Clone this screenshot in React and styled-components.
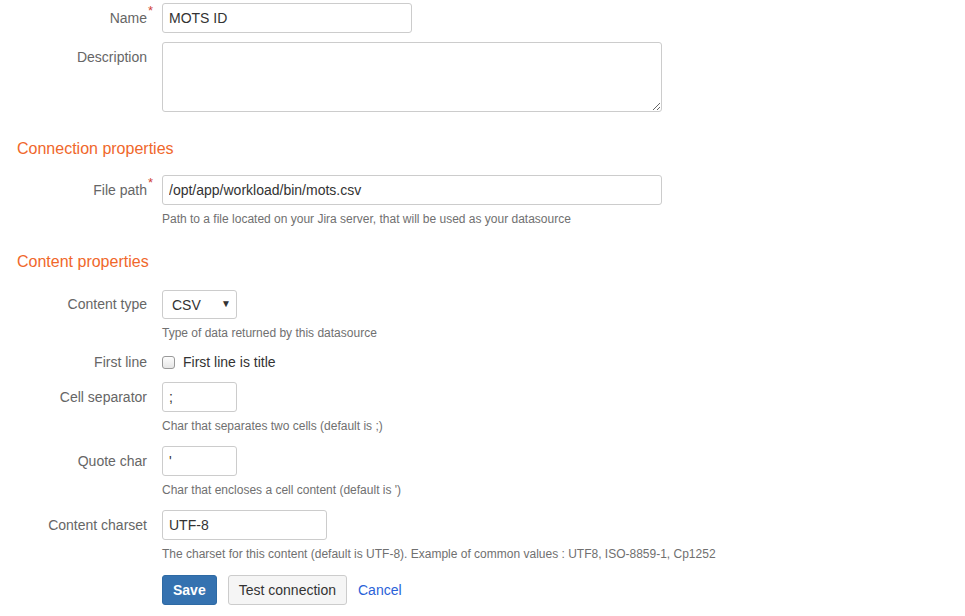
import React from "react";
import styled, { createGlobalStyle } from "styled-components";

const Global = createGlobalStyle`
  html, body { margin: 0; padding: 0; background: #fff; }
  body { font-family: "Liberation Sans", Arial, sans-serif; font-size: 14px; color: #333; }
  * { box-sizing: border-box; }
`;

const Form = styled.form`
  padding: 3px 0 0 0;
  width: 965px;
`;

const Group = styled.div`
  display: grid;
  grid-template-columns: 147px 1fr;
  column-gap: 15px;
  margin-bottom: ${(p) => p.$mb ?? 10}px;
`;

const Label = styled.label`
  position: relative;
  text-align: right;
  color: #666;
  font-size: 14px;
  line-height: ${(p) => p.$lh ?? 30}px;
  white-space: nowrap;
`;

const Req = styled.span`
  position: absolute;
  left: 100%;
  top: ${(p) => p.$top ?? 1}px;
  margin-left: 1px;
  color: #d04437;
  font-size: 13px;
  line-height: 13px;
`;

const Field = styled.div`
  display: flex;
  flex-direction: column;
  align-items: flex-start;
`;

const Input = styled.input`
  width: ${(p) => p.$w}px;
  height: 30px;
  border: 1px solid #ccc;
  border-radius: 3px;
  padding: 0 6px;
  font-family: "Liberation Sans", Arial, sans-serif;
  font-size: 14px;
  color: #333;
  background: #fff;
  outline: none;
`;

const TextArea = styled.textarea`
  width: 500px;
  height: 70px;
  border: 1px solid #ccc;
  border-radius: 3px;
  padding: 6px;
  font-family: "Liberation Sans", Arial, sans-serif;
  font-size: 14px;
  color: #333;
  outline: none;
  display: block;
`;

const Help = styled.div`
  margin-top: 6px;
  margin-bottom: 2px;
  font-size: 12px;
  line-height: 16px;
  color: #707070;
  white-space: nowrap;
`;

const Heading = styled.h3`
  margin: ${(p) => p.$mt}px 0 ${(p) => p.$mb}px 17px;
  font-weight: normal;
  font-size: 16px;
  line-height: 20px;
  color: #f0672b;
`;

const SelectBox = styled.div`
  position: relative;
  width: 75px;
  height: 29px;
  border: 1px solid #ccc;
  border-radius: 3px;
  background: #fff;
  display: flex;
  align-items: center;
  padding: 0 9px;
  font-size: 14px;
  color: #333;
`;

const Arrow = styled.span`
  position: absolute;
  right: 5px;
  top: 8px;
  font-size: 10px;
  line-height: 10px;
  color: #333;
`;

const CheckRow = styled.label`
  display: flex;
  align-items: center;
  gap: 8px;
  height: 18px;
  font-size: 14px;
  color: #333;
`;

const Check = styled.span`
  width: 13px;
  height: 13px;
  border: 1px solid #999;
  border-radius: 3px;
  background: linear-gradient(#fdfdfd, #e6e6e6);
`;

const Buttons = styled.div`
  display: flex;
  align-items: center;
  gap: 11px;
  padding-left: 162px;
`;

const Button = styled.button`
  height: 30px;
  padding: 0 ${(p) => (p.$primary ? 10 : 10)}px;
  border-radius: 3px;
  font-family: "Liberation Sans", Arial, sans-serif;
  font-size: 14px;
  font-weight: ${(p) => (p.$primary ? "bold" : "normal")};
  color: ${(p) => (p.$primary ? "#fff" : "#333")};
  background: ${(p) => (p.$primary ? "#3572b0" : "#f5f5f5")};
  border: 1px solid ${(p) => (p.$primary ? "#2e6aa4" : "#ccc")};
`;

const Link = styled.a`
  color: #2a62d8;
  font-size: 14px;
  text-decoration: none;
`;

export default function App() {
  return (
    <>
      <Global />
      <Form onSubmit={(e) => e.preventDefault()}>
        <Group $mb={9}>
          <Label>
            Name<Req>*</Req>
          </Label>
          <Field>
            <Input $w={250} defaultValue="MOTS ID" />
          </Field>
        </Group>
        <Group $mb={0}>
          <Label>Description</Label>
          <Field>
            <TextArea />
          </Field>
        </Group>

        <Heading $mt={27} $mb={16}>Connection properties</Heading>

        <Group $mb={0}>
          <Label>
            File path<Req>*</Req>
          </Label>
          <Field>
            <Input $w={500} defaultValue="/opt/app/workload/bin/mots.csv" />
            <Help>Path to a file located on your Jira server, that will be used as your datasource</Help>
          </Field>
        </Group>

        <Heading $mt={23} $mb={18}>Content properties</Heading>

        <Group>
          <Label $lh={28}>Content type</Label>
          <Field>
            <SelectBox>
              CSV<Arrow>▼</Arrow>
            </SelectBox>
            <Help>Type of data returned by this datasource</Help>
          </Field>
        </Group>
        <Group $mb={11}>
          <Label $lh={18}>First line</Label>
          <Field>
            <CheckRow>
              <Check />
              First line is title
            </CheckRow>
          </Field>
        </Group>
        <Group $mb={10}>
          <Label>Cell separator</Label>
          <Field>
            <Input $w={75} defaultValue=";" />
            <Help>Char that separates two cells (default is ;)</Help>
          </Field>
        </Group>
        <Group $mb={10}>
          <Label>Quote char</Label>
          <Field>
            <Input $w={75} defaultValue="'" />
            <Help>Char that encloses a cell content (default is ')</Help>
          </Field>
        </Group>
        <Group $mb={11}>
          <Label>Content charset</Label>
          <Field>
            <Input $w={165} defaultValue="UTF-8" />
            <Help>The charset for this content (default is UTF-8). Example of common values : UTF8, ISO-8859-1, Cp1252</Help>
          </Field>
        </Group>

        <Buttons>
          <Button $primary type="submit">Save</Button>
          <Button type="button">Test connection</Button>
          <Link href="#">Cancel</Link>
        </Buttons>
      </Form>
    </>
  );
}
